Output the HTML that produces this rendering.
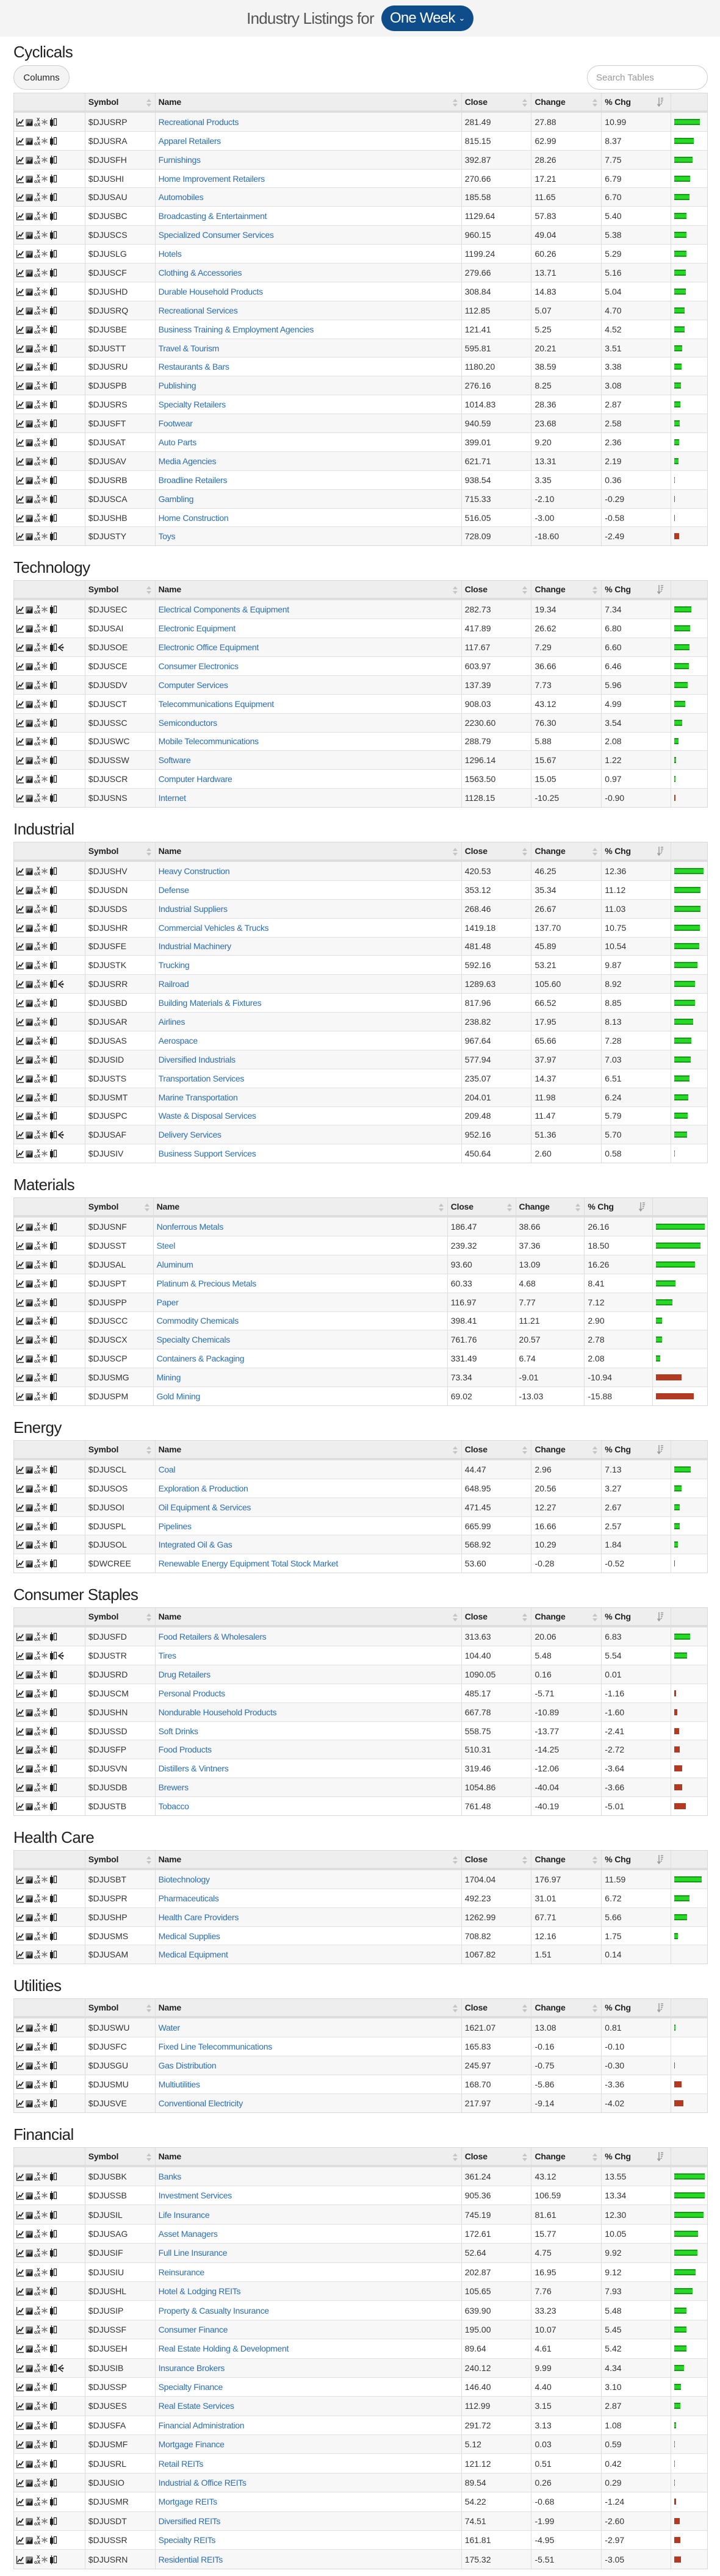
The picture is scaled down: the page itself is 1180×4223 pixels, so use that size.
<!DOCTYPE html>
<html><head><meta charset="utf-8">
<style>
*{box-sizing:border-box}
body{margin:0;width:1180px;background:#fff;font-family:"Liberation Sans",Arial,sans-serif;color:#333}
.top{height:60px;background:#f4f4f4;display:flex;justify-content:center;align-items:center}
.top h1{font-weight:normal;font-size:26px;color:#555;margin:0 12px 0 0;letter-spacing:-0.8px}
.btn{background:#0f4c8a;color:#fff;border-radius:21px;height:42px;width:151px;display:flex;align-items:center;justify-content:center;font-size:24px;letter-spacing:-0.8px}
.btn small{font-size:13px;margin-left:6px}
h2{margin:0;font-weight:normal;font-size:26px;color:#222;letter-spacing:-0.6px;padding-left:22px;line-height:30px}
h2.first{height:47px;padding-top:10px}
h2.s{height:56px;padding-top:20px}
.ctl{height:40px;margin:0 20px 5px 22px;display:flex;justify-content:space-between}
.cbtn{width:92px;height:40px;border:1px solid #ccc;border-radius:20px;background:#f4f4f4;font-size:15px;display:flex;align-items:center;justify-content:center;color:#222}
.srch{width:198px;height:40px;border:1px solid #ccc;border-radius:20px;font-size:15px;color:#999;display:flex;align-items:center;padding-left:14px;background:#fff}
.t{margin-left:22px;width:1138px;border:1px solid #d8d8d8}
.row{display:flex;height:30.9px;align-items:stretch;font-size:14px}
.f .r{height:31.4px}
.row>div{border-left:1px solid #ddd;padding-left:5px;display:flex;align-items:center;white-space:nowrap;overflow:hidden;position:relative}
.row>div:first-child{border-left:none;padding-left:3px}
.h{background:#eee;border-bottom:3px solid #ddd;font-size:14px;font-weight:bold;color:#222;letter-spacing:-0.2px}
.r{border-top:1px solid #e0e0e0}
.t .r:nth-of-type(even){background:#f7f7f7}
.r a{color:#2a6db5;letter-spacing:-0.3px;text-decoration:none}
.c0{width:116px}.c1{width:115px}.c2{width:503px}.c3{width:115px}.c4{width:115px}.c5{width:114px}.c6{width:60px}
.m .c1{width:112px}.m .c2{width:483px}.m .c3{width:112px}.m .c4{width:113px}.m .c5{width:112px}.m .c6{width:90px}
.sa{position:absolute;right:6px;top:9px;width:8px;height:13px}
.g,.d{height:10px;display:block}
.g{background:#27d827;border-top:2px solid #159a15;border-bottom:2px solid #159a15}
.d{background:#b33a22}
svg.ic{width:88px;height:16px}
</style></head><body>
<svg width="0" height="0" style="position:absolute">
<defs>
<symbol id="ic" viewBox="0 0 88 16">
<path d="M1.5 2V14.5H13" stroke="#333" stroke-width="1.4" fill="none"/>
<path d="M3 12L6 8L8 10L12 4" stroke="#222" stroke-width="1.8" fill="none"/>
<rect x="16" y="3" width="12" height="12" rx="2" fill="#888"/>
<path d="M17 14L20 8L23 11L27 5V14Z" fill="#222"/>
<text x="34" y="7" font-size="8" font-family="Liberation Sans" font-weight="bold" fill="#333">X</text>
<text x="30" y="15" font-size="8" font-family="Liberation Sans" font-weight="bold" fill="#333">oX</text>
<path d="M47 3V13M42.5 5.5L51.5 10.5M42.5 10.5L51.5 5.5" stroke="#777" stroke-width="1.3"/>
<rect x="56" y="4" width="5" height="10" fill="#222"/>
<path d="M58.5 1V4M58.5 14V16" stroke="#222" stroke-width="1.2"/>
<rect x="62.5" y="2.5" width="4" height="11" fill="#fff" stroke="#222" stroke-width="1.2"/>
</symbol>
<symbol id="ic2" viewBox="0 0 88 16">
<use href="#ic"/>
<path d="M77 3L70 8.5L77 14M72 8.5H77" stroke="#222" stroke-width="1.6" fill="none"/>
<circle cx="77" cy="8.5" r="1.5" fill="#222"/>
</symbol>
<symbol id="sa" viewBox="0 0 8 13"><path d="M4 0L8 5H0Z M4 13L8 8H0Z" fill="#c4c4c4"/></symbol>
<symbol id="so" viewBox="0 0 10 16"><path d="M3 0V13M0.5 10.5L3 14L5.5 10.5" stroke="#999" stroke-width="1.5" fill="none"/><path d="M6 1H10M6 4H10M6 7H9M6 10H8" stroke="#999" stroke-width="1.5"/></symbol>
</defs></svg>

<div class="top"><h1>Industry Listings for</h1><div class="btn">One Week<small>&#8964;</small></div></div>
<h2 class="first">Cyclicals</h2>
<div class="ctl"><div class="cbtn">Columns</div><div class="srch">Search Tables</div></div>

<div id="content"></div>
<script>
const H='<div class="row h"><div class="c0"></div><div class="c1">Symbol<svg class="sa"><use href="#sa"/></svg></div><div class="c2">Name<svg class="sa"><use href="#sa"/></svg></div><div class="c3">Close<svg class="sa"><use href="#sa"/></svg></div><div class="c4">Change<svg class="sa"><use href="#sa"/></svg></div><div class="c5">% Chg<svg class="sa" style="width:10px;height:16px;top:7px;right:12px"><use href="#so"/></svg></div><div class="c6"></div></div>';
const S=[
["Cyclicals",0,[
["RP","Recreational Products","281.49","27.88","10.99"],["RA","Apparel Retailers","815.15","62.99","8.37"],["FH","Furnishings","392.87","28.26","7.75"],["HI","Home Improvement Retailers","270.66","17.21","6.79"],["AU","Automobiles","185.58","11.65","6.70"],["BC","Broadcasting & Entertainment","1129.64","57.83","5.40"],["CS","Specialized Consumer Services","960.15","49.04","5.38"],["LG","Hotels","1199.24","60.26","5.29"],["CF","Clothing & Accessories","279.66","13.71","5.16"],["HD","Durable Household Products","308.84","14.83","5.04"],["RQ","Recreational Services","112.85","5.07","4.70"],["BE","Business Training & Employment Agencies","121.41","5.25","4.52"],["TT","Travel & Tourism","595.81","20.21","3.51"],["RU","Restaurants & Bars","1180.20","38.59","3.38"],["PB","Publishing","276.16","8.25","3.08"],["RS","Specialty Retailers","1014.83","28.36","2.87"],["FT","Footwear","940.59","23.68","2.58"],["AT","Auto Parts","399.01","9.20","2.36"],["AV","Media Agencies","621.71","13.31","2.19"],["RB","Broadline Retailers","938.54","3.35","0.36"],["CA","Gambling","715.33","-2.10","-0.29"],["HB","Home Construction","516.05","-3.00","-0.58"],["TY","Toys","728.09","-18.60","-2.49"]]],
["Technology",0,[
["EC","Electrical Components & Equipment","282.73","19.34","7.34"],["AI","Electronic Equipment","417.89","26.62","6.80"],["OE","Electronic Office Equipment","117.67","7.29","6.60",1],["CE","Consumer Electronics","603.97","36.66","6.46"],["DV","Computer Services","137.39","7.73","5.96"],["CT","Telecommunications Equipment","908.03","43.12","4.99"],["SC","Semiconductors","2230.60","76.30","3.54"],["WC","Mobile Telecommunications","288.79","5.88","2.08"],["SW","Software","1296.14","15.67","1.22"],["CR","Computer Hardware","1563.50","15.05","0.97"],["NS","Internet","1128.15","-10.25","-0.90"]]],
["Industrial",0,[
["HV","Heavy Construction","420.53","46.25","12.36"],["DN","Defense","353.12","35.34","11.12"],["DS","Industrial Suppliers","268.46","26.67","11.03"],["HR","Commercial Vehicles & Trucks","1419.18","137.70","10.75"],["FE","Industrial Machinery","481.48","45.89","10.54"],["TK","Trucking","592.16","53.21","9.87"],["RR","Railroad","1289.63","105.60","8.92",1],["BD","Building Materials & Fixtures","817.96","66.52","8.85"],["AR","Airlines","238.82","17.95","8.13"],["AS","Aerospace","967.64","65.66","7.28"],["ID","Diversified Industrials","577.94","37.97","7.03"],["TS","Transportation Services","235.07","14.37","6.51"],["MT","Marine Transportation","204.01","11.98","6.24"],["PC","Waste & Disposal Services","209.48","11.47","5.79"],["AF","Delivery Services","952.16","51.36","5.70",1],["IV","Business Support Services","450.64","2.60","0.58"]]],
["Materials",1,[
["NF","Nonferrous Metals","186.47","38.66","26.16"],["ST","Steel","239.32","37.36","18.50"],["AL","Aluminum","93.60","13.09","16.26"],["PT","Platinum & Precious Metals","60.33","4.68","8.41"],["PP","Paper","116.97","7.77","7.12"],["CC","Commodity Chemicals","398.41","11.21","2.90"],["CX","Specialty Chemicals","761.76","20.57","2.78"],["CP","Containers & Packaging","331.49","6.74","2.08"],["MG","Mining","73.34","-9.01","-10.94"],["PM","Gold Mining","69.02","-13.03","-15.88"]]],
["Energy",0,[
["CL","Coal","44.47","2.96","7.13"],["OS","Exploration & Production","648.95","20.56","3.27"],["OI","Oil Equipment & Services","471.45","12.27","2.67"],["PL","Pipelines","665.99","16.66","2.57"],["OL","Integrated Oil & Gas","568.92","10.29","1.84"],["$DWCREE","Renewable Energy Equipment Total Stock Market","53.60","-0.28","-0.52"]]],
["Consumer Staples",0,[
["FD","Food Retailers & Wholesalers","313.63","20.06","6.83"],["TR","Tires","104.40","5.48","5.54",1],["RD","Drug Retailers","1090.05","0.16","0.01"],["CM","Personal Products","485.17","-5.71","-1.16"],["HN","Nondurable Household Products","667.78","-10.89","-1.60"],["SD","Soft Drinks","558.75","-13.77","-2.41"],["FP","Food Products","510.31","-14.25","-2.72"],["VN","Distillers & Vintners","319.46","-12.06","-3.64"],["DB","Brewers","1054.86","-40.04","-3.66"],["TB","Tobacco","761.48","-40.19","-5.01"]]],
["Health Care",0,[
["BT","Biotechnology","1704.04","176.97","11.59"],["PR","Pharmaceuticals","492.23","31.01","6.72"],["HP","Health Care Providers","1262.99","67.71","5.66"],["MS","Medical Supplies","708.82","12.16","1.75"],["AM","Medical Equipment","1067.82","1.51","0.14"]]],
["Utilities",0,[
["WU","Water","1621.07","13.08","0.81"],["FC","Fixed Line Telecommunications","165.83","-0.16","-0.10"],["GU","Gas Distribution","245.97","-0.75","-0.30"],["MU","Multiutilities","168.70","-5.86","-3.36"],["VE","Conventional Electricity","217.97","-9.14","-4.02"]]],
["Financial",2,[
["BK","Banks","361.24","43.12","13.55"],["SB","Investment Services","905.36","106.59","13.34"],["IL","Life Insurance","745.19","81.61","12.30"],["AG","Asset Managers","172.61","15.77","10.05"],["IF","Full Line Insurance","52.64","4.75","9.92"],["IU","Reinsurance","202.87","16.95","9.12"],["HL","Hotel & Lodging REITs","105.65","7.76","7.93"],["IP","Property & Casualty Insurance","639.90","33.23","5.48"],["SF","Consumer Finance","195.00","10.07","5.45"],["EH","Real Estate Holding & Development","89.64","4.61","5.42"],["IB","Insurance Brokers","240.12","9.99","4.34",1],["SP","Specialty Finance","146.40","4.40","3.10"],["ES","Real Estate Services","112.99","3.15","2.87"],["FA","Financial Administration","291.72","3.13","1.08"],["MF","Mortgage Finance","5.12","0.03","0.59"],["RL","Retail REITs","121.12","0.51","0.42"],["IO","Industrial & Office REITs","89.54","0.26","0.29"],["MR","Mortgage REITs","54.22","-0.68","-1.24"],["DT","Diversified REITs","74.51","-1.99","-2.60"],["SR","Specialty REITs","161.81","-4.95","-2.97"],["RN","Residential REITs","175.32","-5.51","-3.05"]]]
];
let out='';
S.forEach((s,i)=>{
 if(i>0) out+='<h2 class="s">'+s[0]+'</h2>';
 const max=s[1]==1?80:50;
 out+='<div class="t'+(s[1]==1?' m':'')+(s[1]==2?' f':'')+'">'+H;
 s[2].forEach(r=>{
  const p=parseFloat(r[4]);const a=Math.abs(p);
  let w=Math.round(4*a-1.5);if(a>=0.25&&w<1)w=1;if(a<0.25)w=0;if(w>max)w=max;
  const bar=w?'<span class="'+(p<0?'d':'g')+'" style="width:'+w+'px"></span>':'';
  const sym=r[0].charAt(0)=='$'?r[0]:'$DJUS'+r[0];
  out+='<div class="row r"><div class="c0"><svg class="ic"><use href="#'+(r[5]?'ic2':'ic')+'"/></svg></div><div class="c1">'+sym+'</div><div class="c2"><a>'+r[1].replace(/&/g,'&amp;')+'</a></div><div class="c3">'+r[2]+'</div><div class="c4">'+r[3]+'</div><div class="c5">'+r[4]+'</div><div class="c6">'+bar+'</div></div>';
 });
 out+='</div>';
});
document.getElementById('content').innerHTML=out;
</script>
</body></html>
